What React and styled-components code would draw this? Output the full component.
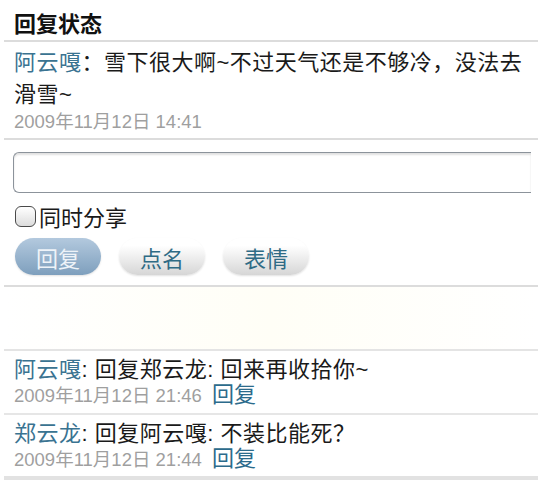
import React from "react";
import styled, { createGlobalStyle } from "styled-components";

const GlobalStyle = createGlobalStyle`
  body {
    margin: 0;
    background: #ffffff;
    font-family: "Liberation Sans", "Noto Sans CJK SC", sans-serif;
  }
`;

const comments = [
  { name: "阿云嘎", text: "回复郑云龙: 回来再收拾你~", time: "2009年11月12日 21:46" },
  { name: "郑云龙", text: "回复阿云嘎: 不装比能死？", time: "2009年11月12日 21:44" },
];

function App() {
  return (
    <>
      <GlobalStyle />
      <Page>
        <Title>回复状态</Title>
        <Post>
          <Text>
            <Name>阿云嘎</Name>：雪下很大啊~不过天气还是不够冷，没法去滑雪~
          </Text>
          <Date>2009年11月12日 14:41</Date>
        </Post>
        <Form>
          <Input />
          <CheckRow>
            <Check />
            同时分享
          </CheckRow>
          <Buttons>
            <Pill primary>回复</Pill>
            <Pill>点名</Pill>
            <Pill>表情</Pill>
          </Buttons>
        </Form>
        <Blank />
        {comments.map((c, i) => (
          <Comment key={i} last={i === comments.length - 1}>
            <CommentText>
              <Name>{c.name}</Name>: {c.text}
            </CommentText>
            <Date>
              {c.time}
              <ReplyLink>回复</ReplyLink>
            </Date>
          </Comment>
        ))}
      </Page>
    </>
  );
}

export default App;

const Page = styled.div`
  width: 534px;
  padding: 0 16px 0 4px;
`;

const Title = styled.div`
  font-family: "Noto Sans CJK SC", sans-serif;
  font-weight: bold;
  font-size: 22px;
  line-height: 30px;
  color: #111;
  padding: 7px 10px 3px;
  border-bottom: 2px solid #dcdcdc;
`;

const Post = styled.div`
  padding: 5px 0 5px 10px;
  border-bottom: 2px solid #dcdcdc;
`;

const Text = styled.div`
  font-size: 22px;
  letter-spacing: 0.5px;
  line-height: 32px;
  color: #1a1a1a;
`;

const CommentText = styled(Text)`
  line-height: 28px;
`;

const Name = styled.span`
  color: #3a7391;
`;

const Date = styled.div`
  font-size: 18.5px;
  line-height: 22px;
  color: #9f9f9f;
`;

const ReplyLink = styled.span`
  font-size: 22px;
  color: #2c6b8c;
  margin-left: 10px;
`;

const Form = styled.div`
  padding: 12px 0 10px;
  border-bottom: 2px solid #dcdcdc;
`;

const Input = styled.div`
  margin-left: 9px;
  width: 517px;
  height: 39px;
  border: 1px solid #8c939b;
  border-right: none;
  border-radius: 6px 0 0 6px;
  box-shadow: inset 0 2px 2px rgba(0, 0, 0, 0.12);
`;

const CheckRow = styled.div`
  display: flex;
  align-items: center;
  gap: 3px;
  margin: 11px 0 0 11px;
  font-family: "Noto Sans CJK SC", sans-serif;
  font-size: 22px;
  line-height: 24px;
  color: #1a1a1a;
`;

const Check = styled.span`
  width: 19px;
  height: 19px;
  border: 1.5px solid #4a4a4a;
  border-radius: 6px;
  background: linear-gradient(#ffffff, #dcdcdc);
`;

const Buttons = styled.div`
  display: flex;
  gap: 18px;
  margin: 10px 0 0 11px;
`;

const Pill = styled.div`
  width: 86px;
  height: 37px;
  border-radius: 19px;
  display: flex;
  align-items: center;
  justify-content: center;
  font-family: "Noto Sans CJK SC", sans-serif;
  font-size: 22px;
  color: ${(p) => (p.primary ? "#eef3f8" : "#2f6b85")};
  background: ${(p) =>
    p.primary
      ? "linear-gradient(#b3c9de, #7e9fbd)"
      : "linear-gradient(#ffffff 20%, #d6d6d6)"};
  box-shadow: 0 1px 2px rgba(0, 0, 0, 0.12);
`;

const Blank = styled.div`
  height: 62px;
  border-bottom: 2px solid #e4e4e4;
  background: linear-gradient(90deg, #ffffff, #fffef6 50%, #ffffff);
`;

const Comment = styled.div`
  padding: 5px 10px ${(p) => (p.last ? "5px" : "6px")};
  border-bottom: ${(p) => (p.last ? "4px solid #e2e2e2" : "2px solid #e6e6e6")};
`;
